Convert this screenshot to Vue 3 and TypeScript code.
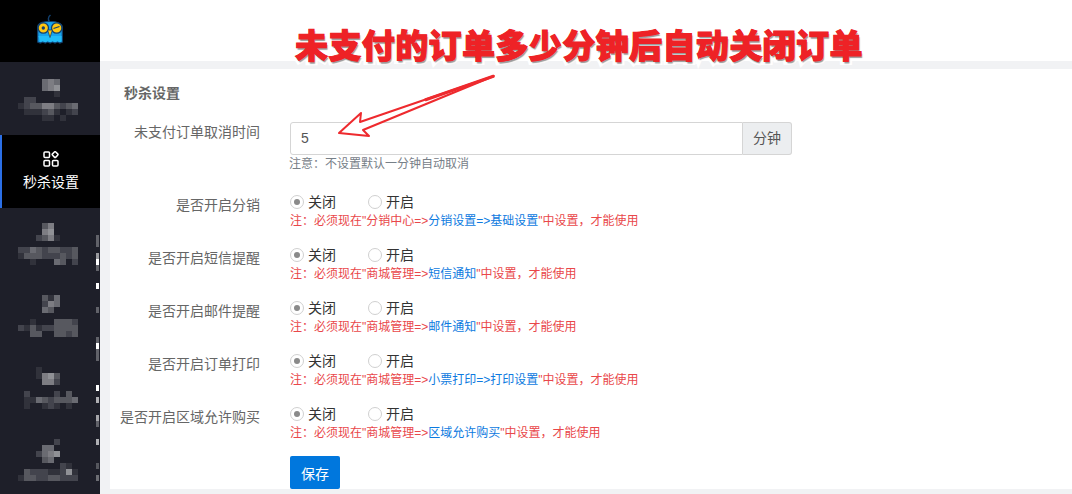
<script setup lang="ts">
interface Mosaic { offset: number; rows: string[] }
const mosaics: Mosaic[] = [
  { offset: 5, rows: ['0000454000', '0000456000', '0000001000', '0220000000', '1233553234', '0111231012', '0000110100'] },
  { offset: 3, rows: ['0000350000', '0000560000', '0002351000', '0000000000', '2243233223', '1333222323', '0010004302'] },
  { offset: 2, rows: ['0000314000', '0000254000', '0000430000', '0000000000', '0010003332', '2131223333', '0033003323'] },
  { offset: 1, rows: ['0001000000', '0001563000', '0000552000', '0000000000', '0200002030', '0114323334', '0100121010'] },
  { offset: 0, rows: ['0000002000', '0000440000', '0002456000', '0000340000', '0000000210', '0322211261', '1332233222'] }
]
const cells = (m: Mosaic) =>
  m.rows.flatMap((row, r) =>
    [...row].map((v, c) => ({ x: c * 6, y: m.offset + r * 6, o: Number(v) * 0.085 })).filter((x) => x.o > 0)
  )
const strip = [
  [235, 12, 0.3], [253, 6, 0.55], [259, 6, 1], [265, 6, 0.3], [283, 6, 1], [307, 6, 0.3], [337, 6, 0.3],
  [343, 6, 1], [349, 12, 0.3], [385, 6, 1], [397, 6, 0.65], [415, 6, 0.6], [421, 6, 0.3], [439, 6, 0.65],
  [463, 6, 0.25], [475, 6, 0.35]
]
const rows = [
  { label: '是否开启分销', parts: ['分销中心=>', '分销设置=>基础设置', '中设置，才能使用'] },
  { label: '是否开启短信提醒', parts: ['商城管理=>', '短信通知', '中设置，才能使用'] },
  { label: '是否开启邮件提醒', parts: ['商城管理=>', '邮件通知', '中设置，才能使用'] },
  { label: '是否开启订单打印', parts: ['商城管理=>', '小票打印=>打印设置', '中设置，才能使用'] },
  { label: '是否开启区域允许购买', parts: ['商城管理=>', '区域允许购买', '中设置，才能使用'] }
]
</script>

<template>
  <div class="page">
    <aside class="side">
      <div class="logo">
        <svg width="30" height="32" viewBox="0 0 30 32">
          <path d="M14.500 9c-1.500-2-1.500-5 1-7" fill="none" stroke="#12406e" stroke-width="1.600" />
          <path d="M2.700 29V14c0-3.500 5-5.500 12.300-5.500s12.300 2 12.300 5.500v15l-2.400 1-2.400-1-2.500 1-2.400-1-2.500 1-2.400-1-2.500 1-2.400-1-2.500 1z" fill="#17a5ee" stroke="#12406e" stroke-width="1.200" />
          <path d="M3.400 23h23.200v5.500l-1.700.8-2.400-1-2.500 1-2.400-1-2.500 1-2.400-1-2.500 1-2.400-1-2.500.8z" fill="#22bdf8" />
          <circle cx="8.300" cy="15" r="5.200" fill="#ffc710" stroke="#12406e" stroke-width="1.300" />
          <circle cx="21.700" cy="15" r="5.200" fill="#ffc710" stroke="#12406e" stroke-width="1.300" />
          <circle cx="8.300" cy="15" r="1.700" fill="#12406e" />
          <path d="M18.500 15.500l6-2" stroke="#12406e" stroke-width="1.300" />
          <path d="M12.600 17h4.800l-2.400 7.500z" fill="#ffc710" stroke="#12406e" stroke-width="0.800" />
        </svg>
      </div>
      <div class="nav">
        <svg class="mosaic" width="60" height="48" viewBox="0 0 60 48">
          <rect v-for="(c, i) in cells(mosaics[0])" :key="i" :x="c.x" :y="c.y" width="6" height="6" fill="#fff" :fill-opacity="c.o" />
        </svg>
      </div>
      <div class="nav active">
        <svg width="16" height="16" viewBox="0 0 16 16" fill="none" stroke="#fff" stroke-width="1.500">
          <rect x="1" y="1" width="5.500" height="5.500" rx="1" />
          <rect x="9.800" y="1.300" width="4.600" height="4.600" rx="1" transform="rotate(45 12.100 3.600)" />
          <rect x="1" y="9.500" width="5.500" height="5.500" rx="1" />
          <rect x="9.500" y="9.500" width="5.500" height="5.500" rx="1" />
        </svg>
        <span>秒杀设置</span>
      </div>
      <div v-for="(m, n) in mosaics.slice(1)" :key="n" class="nav">
        <svg class="mosaic" width="60" height="48" viewBox="0 0 60 48">
          <rect v-for="(c, i) in cells(m)" :key="i" :x="c.x" :y="c.y" width="6" height="6" fill="#fff" :fill-opacity="c.o" />
        </svg>
      </div>
      <svg class="strip" width="3" height="259" viewBox="0 235 3 259">
        <rect v-for="(s, i) in strip" :key="i" x="0" :y="s[0]" width="3" :height="s[1]" fill="#fff" :fill-opacity="s[2]" />
      </svg>
    </aside>
    <main class="main">
      <header class="top"></header>
      <section class="card">
        <h2 class="title">秒杀设置</h2>
        <div class="row first">
          <label class="label">未支付订单取消时间</label>
          <div class="body">
            <div class="group">
              <div class="input">5</div>
              <div class="addon">分钟</div>
            </div>
            <p class="hint">注意：不设置默认一分钟自动取消</p>
          </div>
        </div>
        <div v-for="r in rows" :key="r.label" class="row">
          <label class="label">{{ r.label }}</label>
          <div class="body">
            <div class="radios">
              <span class="radio"><i class="dot on"></i>关闭</span>
              <span class="radio"><i class="dot"></i>开启</span>
            </div>
            <p class="note">注：必须现在"{{ r.parts[0] }}<span class="link">{{ r.parts[1] }}</span>"{{ r.parts[2] }}</p>
          </div>
        </div>
        <div class="row actions">
          <div class="label"></div>
          <button class="save">保存</button>
        </div>
      </section>
    </main>
    <div class="headline" data-text="未支付的订单多少分钟后自动关闭订单">未支付的订单多少分钟后自动关闭订单</div>
    <svg class="arrow" width="170" height="75" viewBox="330 70 170 75">
      <path d="M494 76 L360 122 L361 113 L339 133 L369 136 L363 130 Z" fill="#fff" stroke="#ee2a2e" stroke-width="2" stroke-linejoin="round" />
      <path d="M494 76 L425 100" stroke="#ee2a2e" stroke-width="3" fill="none" />
    </svg>
  </div>
</template>

<style>
html, body { margin: 0; background: #f1f2f4; overflow: hidden; }
</style>

<style scoped>
.page {
  position: relative;
  display: flex;
  width: 1072px;
  height: 494px;
  overflow: hidden;
  background: #f1f2f4;
  font-family: "Liberation Sans", "Noto Sans CJK SC", sans-serif;
  font-size: 14px;
  color: #333;
}
.side { position: relative; flex: 0 0 100px; background: #1e1f29; }
.logo { display: flex; justify-content: center; padding-top: 13px; height: 49px; background: #000; }
.nav { box-sizing: border-box; height: 73px; padding: 12px 0 0 18px; }
.mosaic { display: block; }
.nav.active {
  display: flex;
  flex-direction: column;
  align-items: center;
  gap: 5px;
  padding: 16px 0 0;
  background: #000;
  color: #fff;
  border-left: 2px solid #2b6fe6;
}
.nav.active span { line-height: 20px; }
.strip { position: absolute; right: 1px; top: 235px; }
.main { flex: 1; display: flex; flex-direction: column; min-width: 0; }
.top { flex: 0 0 61px; background: #fff; }
.card {
  box-sizing: border-box;
  height: 420px;
  margin: 8px 0 0 10px;
  padding: 15px 0 0 14px;
  background: #fff;
}
.title { margin: 0 0 20px; font-size: 14px; line-height: 18px; font-weight: 700; color: #666; }
.row { display: flex; margin: 0 0 0 -14px; height: 53px; }
.row.first { height: 66px; }
.label { flex: 0 0 150px; text-align: right; line-height: 20px; color: #666; padding-top: 7px; }
.row.first .label { padding-top: 0; }
.body { margin-left: 30px; }
.group { display: flex; width: 502px; height: 33px; }
.input {
  box-sizing: border-box;
  flex: 1;
  padding-left: 10px;
  line-height: 31px;
  border: 1px solid #d5d5d5;
  border-radius: 3px 0 0 3px;
  color: #555;
}
.addon {
  box-sizing: border-box;
  flex: 0 0 49px;
  text-align: center;
  line-height: 31px;
  color: #555;
  background: #eceef0;
  border: 1px solid #d5d5d5;
  border-left: 0;
  border-radius: 0 3px 3px 0;
}
.hint { margin: 1px 0 0 -1px; font-size: 12px; line-height: 16px; color: #778088; }
.radios { display: flex; height: 20px; margin-top: 3px; }
.radio { display: flex; align-items: center; width: 78px; color: #333; }
.dot {
  box-sizing: border-box;
  display: flex;
  align-items: center;
  justify-content: center;
  width: 14px;
  height: 14px;
  margin: 2px 4px 0 0;
  border: 1px solid #d0d0d0;
  border-radius: 50%;
}
.dot.on::after { content: ""; width: 6px; height: 6px; border-radius: 50%; background: #8a8a8a; }
.note { margin: 2px 0 0; font-size: 12px; line-height: 16px; color: #e9474a; }
.link { color: #0d7ae0; }
.actions { height: 33px; margin-top: 3px; }
.save {
  margin: 0 0 0 30px;
  width: 50px;
  height: 33px;
  padding: 0;
  border: 0;
  border-radius: 2px;
  background: #0077dd;
  color: #fff;
  font: inherit;
}
.headline {
  position: absolute;
  left: 295px;
  top: 24px;
  font-size: 33px;
  letter-spacing: 0.4px;
  line-height: 46px;
  font-weight: 900;
  white-space: nowrap;
  color: #ee2226;
  -webkit-text-stroke: 7px #fff;
  paint-order: stroke fill;
  text-shadow: 1px 2px 1px #999;
}
.headline::after {
  content: attr(data-text);
  position: absolute;
  left: 0;
  top: 0;
  color: #ee2226;
  -webkit-text-stroke: 1px #ee2226;
  text-shadow: none;
}
.arrow { position: absolute; left: 330px; top: 70px; }
</style>
